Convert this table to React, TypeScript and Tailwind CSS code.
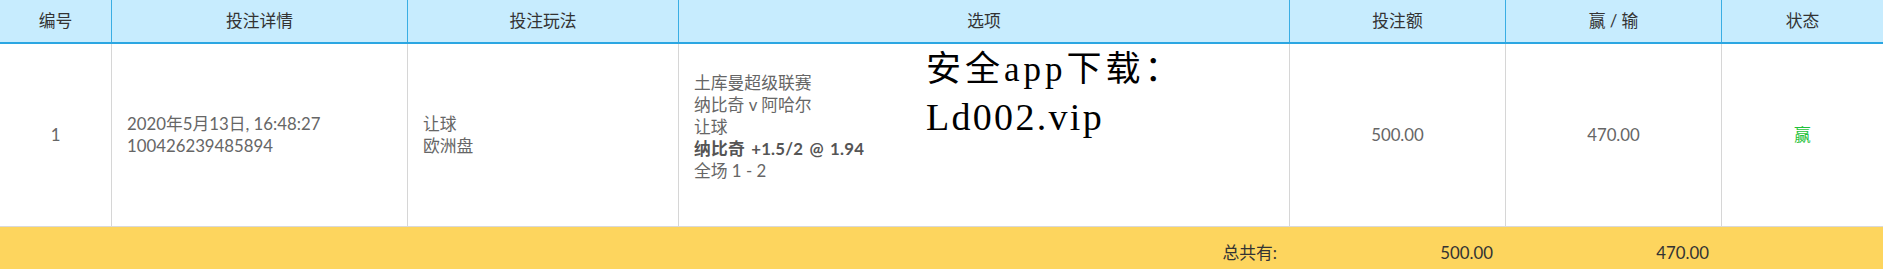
import React from 'react';

interface BetRow {
    id: number;
    time: string;
    orderNo: string;
    playType: string[];
    league: string;
    match: string;
    market: string;
    pickTeam: string;
    pickLine: string;
    score: string;
    stake: string;
    winLoss: string;
    status: string;
}

const cols = 'grid grid-cols-[112px_296px_271px_611px_216px_216px_161px]';

const headers = ['编号', '投注详情', '投注玩法', '选项', '投注额', '赢 / 输', '状态'];

const rows: BetRow[] = [
    {
        id: 1,
        time: '2020年5月13日, 16:48:27',
        orderNo: '100426239485894',
        playType: ['让球', '欧洲盘'],
        league: '土库曼超级联赛',
        match: '纳比奇 v 阿哈尔',
        market: '让球',
        pickTeam: '纳比奇',
        pickLine: '+1.5/2 @ 1.94',
        score: '全场 1 - 2',
        stake: '500.00',
        winLoss: '470.00',
        status: '赢',
    },
];

const App: React.FC = () => {
    return (
        <div
            className="w-[1883px] bg-white text-[16.8px] leading-[22px] text-[#666]"
            style={{ fontFamily: 'Lato, "Noto Sans CJK SC", sans-serif' }}
        >
            {/* Header */}
            <div className={`${cols} h-[44px] bg-[#c7ecfe] border-b-2 border-[#2ba6e2] text-[#333]`}>
                {headers.map((h, i) => (
                    <div
                        key={i}
                        className={`flex items-center justify-center ${i < headers.length - 1 ? 'border-r border-[#3aaee4]' : ''}`}
                    >
                        {h}
                    </div>
                ))}
            </div>

            {/* Rows */}
            {rows.map((r) => (
                <div key={r.id} className={`${cols} h-[183px] border-b border-[#d9d9d9]`}>
                    <div className="flex items-center justify-center border-r border-[#d6d6d6]">{r.id}</div>
                    <div className="flex flex-col justify-center pl-[15px] border-r border-[#d6d6d6]">
                        <span>{r.time}</span>
                        <span>{r.orderNo}</span>
                    </div>
                    <div className="flex flex-col justify-center pl-[15px] border-r border-[#d6d6d6]">
                        {r.playType.map((p) => (
                            <span key={p}>{p}</span>
                        ))}
                    </div>
                    <div className="relative flex flex-col pl-[15px] pt-[28px] border-r border-[#d6d6d6]">
                        <span>{r.league}</span>
                        <span>{r.match}</span>
                        <span>{r.market}</span>
                        <span className="font-bold text-[#555] tracking-[0.2px] [word-spacing:2px]">
                            {r.pickTeam} {r.pickLine}
                        </span>
                        <span>{r.score}</span>

                        {/* watermark overlay */}
                        <div className="absolute left-[247px] top-[1px] text-black">
                            <div
                                className="text-[35px] leading-[49px] tracking-[4px]"
                                style={{ fontFamily: '"Liberation Serif", "Noto Sans CJK SC", serif' }}
                            >
                                安全app下载：
                            </div>
                            <div
                                className="text-[38px] leading-[46px] tracking-[2.3px]"
                                style={{ fontFamily: '"Liberation Serif", serif' }}
                            >
                                Ld002.vip
                            </div>
                        </div>
                    </div>
                    <div className="flex items-center justify-center border-r border-[#d6d6d6]">{r.stake}</div>
                    <div className="flex items-center justify-center border-r border-[#d6d6d6]">{r.winLoss}</div>
                    <div className="flex items-center justify-center text-[#1fc23a]">{r.status}</div>
                </div>
            ))}

            {/* Totals */}
            <div className={`${cols} h-[52px] bg-[#fdd55e] text-[#333]`}>
                <div />
                <div />
                <div />
                <div className="flex items-center justify-end pr-[13px]">总共有:</div>
                <div className="flex items-center justify-end pr-[13px]">500.00</div>
                <div className="flex items-center justify-end pr-[13px]">470.00</div>
                <div />
            </div>
        </div>
    );
};

export default App;
